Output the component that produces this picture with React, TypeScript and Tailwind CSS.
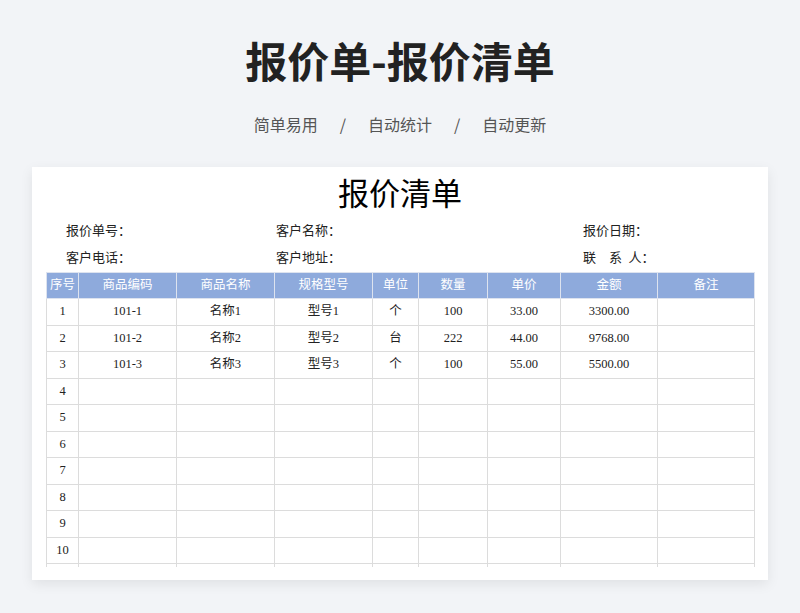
import React from 'react'

const cols = [32, 98, 98, 98, 46, 69, 73, 97, 97]
const heads = ['序号', '商品编码', '商品名称', '规格型号', '单位', '数量', '单价', '金额', '备注']
const data = [
	['1', '101-1', '名称1', '型号1', '个', '100', '33.00', '3300.00', ''],
	['2', '101-2', '名称2', '型号2', '台', '222', '44.00', '9768.00', ''],
	['3', '101-3', '名称3', '型号3', '个', '100', '55.00', '5500.00', ''],
]
const rows = [...data, ...Array.from({ length: 7 }, (_, i) => [String(i + 4), '', '', '', '', '', '', '', ''])]

const serif = { fontFamily: '"Liberation Serif", "Noto Sans CJK SC", serif' }

const App = () => {
	return (
		<div className="w-[800px] h-[613px] bg-[#f2f4f7] flex flex-col items-center overflow-hidden" style={{ fontFamily: '"Noto Sans CJK SC", sans-serif' }}>
			<h1 className="mt-[32px] text-[42px] leading-[56px] font-bold text-[#222]">报价单-报价清单</h1>
			<div className="mt-[24px] flex items-center gap-[22px] text-[16px] leading-[24px] text-[#555]">
				<span>简单易用</span>
				<span>/</span>
				<span>自动统计</span>
				<span>/</span>
				<span>自动更新</span>
			</div>
			<div className="mt-[31px] w-[736px] h-[413px] bg-white shadow-[0_4px_12px_rgba(0,0,0,0.08)] flex flex-col" style={serif}>
				<div className="text-center text-[31px] leading-[40px] mt-[8px] text-black">报价清单</div>
				<div className="grid grid-cols-[210px_307px_1fr] pl-[34px] mt-[2px] text-[13px] leading-[27px] text-[#222]">
					<span>报价单号：</span>
					<span>客户名称：</span>
					<span>报价日期：</span>
					<span>客户电话：</span>
					<span>客户地址：</span>
					<span>联&nbsp;&nbsp;&nbsp;&nbsp;系&nbsp;&nbsp;人：</span>
				</div>
				<div className="ml-[14px] mt-[1px] h-[295px] overflow-hidden">
					<table className="border-collapse text-[12.5px] text-[#222] table-fixed">
						<colgroup>
							{cols.map((w, i) => (
								<col key={i} style={{ width: w }} />
							))}
						</colgroup>
						<thead>
							<tr className="h-[26px] bg-[#8eaadc] text-white">
								{heads.map((h, i) => (
									<th key={i} className="font-normal border border-[#dde3ef] p-0">{h}</th>
								))}
							</tr>
						</thead>
						<tbody>
							{rows.map((r, ri) => (
								<tr key={ri} className="h-[26.5px]">
									{r.map((c, ci) => (
										<td key={ci} className="border border-[#dcdcdc] text-center p-0">{c}</td>
									))}
								</tr>
							))}
							<tr className="h-[26.5px]">
								{cols.map((_, ci) => (
									<td key={ci} className="border border-[#dcdcdc] p-0" />
								))}
							</tr>
						</tbody>
					</table>
				</div>
			</div>
		</div>
	)
}

export default App
